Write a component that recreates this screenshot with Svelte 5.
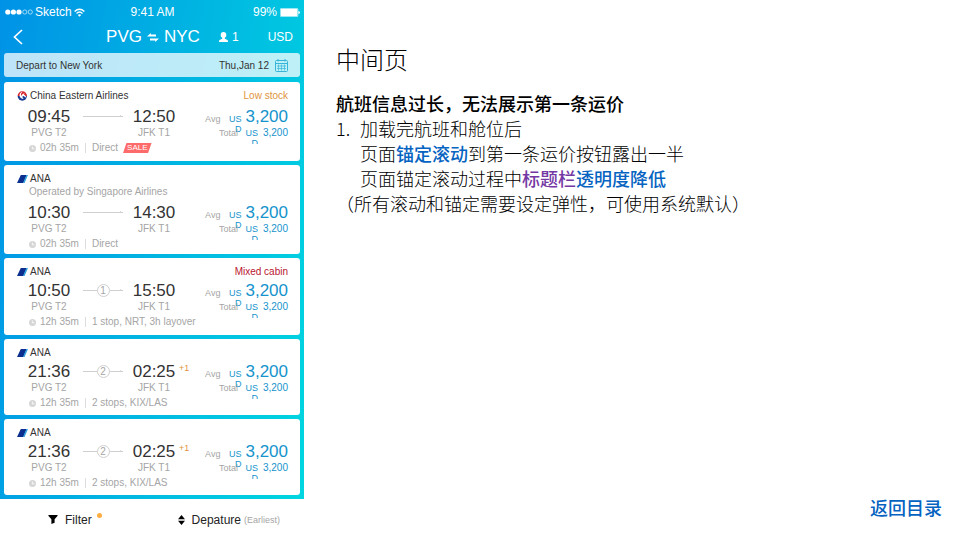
<script>
  const flights = [
    { airline: 'China Eastern Airlines', logo: 'mu', tag: 'Low stock', tone: 'low', dep: '09:45', arr: '12:50', stops: 0, duration: '02h 35m', detail: 'Direct', sale: true },
    { airline: 'ANA', logo: 'ana', operated: 'Operated by Singapore Airlines', dep: '10:30', arr: '14:30', stops: 0, duration: '02h 35m', detail: 'Direct' },
    { airline: 'ANA', logo: 'ana', tag: 'Mixed cabin', tone: 'mixed', dep: '10:50', arr: '15:50', stops: 1, duration: '12h 35m', detail: '1 stop, NRT, 3h layover' },
    { airline: 'ANA', logo: 'ana', dep: '21:36', arr: '02:25', nextDay: '+1', stops: 2, duration: '12h 35m', detail: '2 stops, KIX/LAS' },
    { airline: 'ANA', logo: 'ana', dep: '21:36', arr: '02:25', nextDay: '+1', stops: 2, duration: '12h 35m', detail: '2 stops, KIX/LAS' }
  ];
</script>

<div class="page">
  <section class="phone">
    <div class="screen">
      <div class="status">
        <span class="carrier">
          <svg width="28" height="6" viewBox="0 0 28 6" aria-hidden="true">
            <circle cx="2.8" cy="3" r="2.6" fill="#fff" /><circle cx="8.4" cy="3" r="2.6" fill="#fff" /><circle cx="14" cy="3" r="2.6" fill="#fff" />
            <circle cx="19.8" cy="3" r="2.1" fill="none" stroke="#fff" stroke-width=".6" /><circle cx="25.3" cy="3" r="2.1" fill="none" stroke="#fff" stroke-width=".6" />
          </svg>
          <span>Sketch</span>
          <svg width="11" height="9" viewBox="0 0 11 9" fill="none" stroke="#fff" stroke-width="1.4" aria-hidden="true">
            <path d="M.6 3.4Q5.5-1 10.4 3.4M2.5 5.4Q5.5 2.7 8.5 5.4" /><path d="M3.8 6.9Q5.5 5.4 7.2 6.9L5.5 8.7Z" fill="#fff" stroke="none" />
          </svg>
        </span>
        <span>9:41 AM</span>
        <span class="battery">
          <span>99%</span>
          <svg width="20" height="9" viewBox="0 0 20 9" aria-hidden="true">
            <rect x=".3" y=".3" width="17.6" height="8.4" rx="1" fill="none" stroke="#fff" stroke-width=".6" /><rect x=".8" y=".8" width="16.6" height="7.4" rx=".5" fill="#fff" /><path d="M18.4 3Q20 3.2 20 4.5T18.4 6Z" fill="#fff" />
          </svg>
        </span>
      </div>

      <header>
        <button class="back" aria-label="Back">
          <svg width="10" height="16" viewBox="0 0 10 16" fill="none" stroke="#fff" stroke-width="1.7"><path d="M9 1L1.5 8L9 15" /></svg>
        </button>
        <div class="route">
          <span>PVG</span>
          <svg width="12" height="9" viewBox="0 0 12 9" fill="#fff" aria-hidden="true"><path d="M3.8 0V1.6H9V3.4H0ZM8.2 9V7.4H3V5.6H12Z" /></svg>
          <span>NYC</span>
        </div>
        <div class="extras">
          <span class="travellers">
            <svg width="9" height="10" viewBox="0 0 9 10" fill="#fff" aria-hidden="true"><path d="M4.5 0C6.4 0 7.3 1.2 7.3 2.9C7.3 4.2 6.7 5.1 5.8 5.8V6.8L8.5 8Q9 8.4 9 10H0Q0 8.4.5 8L3.2 6.8V5.8C2.3 5.1 1.7 4.2 1.7 2.9C1.7 1.2 2.6 0 4.5 0Z" /></svg>
            1
          </span>
          <span>USD</span>
        </div>
      </header>

      <button class="date">
        <span>Depart to New York</span>
        <span class="day">
          Thu,Jan 12
          <svg width="13" height="13" viewBox="0 0 13 13" fill="none" stroke="#38b4d8" aria-hidden="true">
            <rect x=".5" y="1.5" width="12" height="11" rx="1" /><path d="M.5 4.5H12.5M3 0V2.5M10 0V2.5" />
            <path stroke-width=".7" d="M2 7H11M2 9.5H11M3.5 5.5V11.5M6.5 5.5V11.5M9.5 5.5V11.5" />
          </svg>
        </span>
      </button>

      {#each flights as f}
        <article class:tall={f.operated} class:roomy={f.sale} class:compact={f.nextDay}>
          <div class="head">
            {#if f.logo === 'mu'}
              <svg width="11" height="10" viewBox="0 0 11 10" aria-hidden="true">
                <path d="M.6 5A4.7 4.7 0 0 1 10 5Z" fill="#d8232c" /><path d="M.6 5A4.7 4.7 0 0 0 10 5Z" fill="#1b3c92" />
                <path d="M5.7.8C3 1.2 1.8 3.8 3 6C3.7 7.3 5.2 8 6.8 7.7C5.4 7 5.2 5.7 6 4.8L9.6 7C9 5.4 8 4.2 6.8 3.6L7.8 2.5L6 2.7C4.8 3.5 4.2 4.5 4.3 5.6C3.5 3.7 4 1.9 5.7.8Z" fill="#fff" />
              </svg>
            {:else}
              <svg width="11" height="8" viewBox="0 0 11 8" aria-hidden="true"><path d="M3.8 0H9.8L6.4 8H0Z" fill="#0c2f8f" /><path d="M9.4 0H11L7.6 8H6Z" fill="#32a4df" /></svg>
            {/if}
            <span class="airline">{f.airline}</span>
            {#if f.tag}<span class="tag {f.tone}">{f.tag}</span>{/if}
          </div>
          {#if f.operated}<div class="operated">{f.operated}</div>{/if}

          <div class="body">
            <div class="stop"><time>{f.dep}</time><span>PVG T2</span></div>
            <div class="path">
              {#if f.stops}
                <i></i><b>{f.stops}</b><i class="end"></i>
              {:else}
                <i class="end"></i>
              {/if}
            </div>
            <div class="stop"><time>{f.arr}</time><span>JFK T1</span></div>
            <sup>{f.nextDay ?? ''}</sup>
            <div class="prices">
              <div class="price avg"><span>Avg</span><em>USD</em><strong>3,200</strong></div>
              <div class="price total"><span>Total</span><em>USD</em><strong>3,200</strong></div>
            </div>
          </div>

          <div class="foot">
            <svg width="7" height="7" viewBox="0 0 7 7" aria-hidden="true"><circle cx="3.5" cy="3.5" r="3.5" fill="#d6d6d6" /><path d="M3.4 1.5V3.8H5.3" fill="none" stroke="#fff" stroke-width=".8" /></svg>
            <span class="duration">{f.duration}</span>
            <span class="detail">{f.detail}</span>
            {#if f.sale}<span class="sale">SALE</span>{/if}
          </div>
        </article>
      {/each}
    </div>

    <footer>
      <button class="filter">
        <svg width="10" height="9" viewBox="0 0 10 9" aria-hidden="true"><path d="M.5 0H9.5Q10 .7 9 1.6L6.6 4.2V7.8L3.4 9V4.2L1 1.6Q0 .7.5 0Z" /></svg>
        <span>Filter</span>
        <span class="dot"></span>
      </button>
      <button class="sort">
        <svg width="7" height="10" viewBox="0 0 7 10" aria-hidden="true"><path d="M3.5 0L7 4.2H0ZM3.5 10L7 5.8H0Z" /></svg>
        <span>Depature</span>
        <small>(Earliest)</small>
      </button>
    </footer>
  </section>

  <main>
    <h1>中间页</h1>
    <h2>航班信息过长，无法展示第一条运价</h2>
    <div class="item">
      <span>1.</span>
      <p>加载完航班和舱位后<br />页面<a href="#anchor">锚定滚动</a>到第一条运价按钮露出一半<br />页面锚定滚动过程中<a class="seen" href="#title-bar">标题栏</a><a href="#opacity">透明度降低</a></p>
    </div>
    <p>（所有滚动和锚定需要设定弹性，可使用系统默认）</p>
    <a class="return" href="#contents">返回目录</a>
  </main>
</div>

<style>
  :global(body) { margin: 0; background: #fff; }
  .page {
    display: grid;
    grid-template-columns: minmax(304px, 19fr) 41fr;
    min-height: 100vh;
    font-family: "Liberation Sans", Arial, sans-serif;
  }
  button { border: 0; padding: 0; background: none; font: inherit; color: inherit; cursor: pointer; }
  svg { display: block; flex: none; }
  .phone { display: flex; flex-direction: column; }
  .screen {
    display: flex;
    flex-direction: column;
    padding: 3px 4px 4px;
    background: linear-gradient(100deg, #0092e6 0%, #00b4e2 50%, #00d6e0 100%);
  }
  .status {
    display: grid;
    grid-template-columns: 1fr auto 1fr;
    align-items: center;
    height: 18px;
    padding: 0 0 0 1px;
    color: #fff;
    font-size: 12px;
    line-height: 18px;
  }
  .carrier, .battery { display: flex; align-items: center; gap: 2px; }
  .battery { justify-content: flex-end; gap: 3px; }
  header {
    display: grid;
    grid-template-columns: 1fr auto 1fr;
    align-items: center;
    height: 32px;
    padding: 0 7px 0 9px;
    color: #fff;
  }
  .back { justify-self: start; }
  .route { display: flex; align-items: center; gap: 5px; font-size: 17px; }
  .extras { display: flex; align-items: center; justify-content: space-between; padding-left: 19px; font-size: 12px; }
  .travellers { display: flex; align-items: center; gap: 4px; }
  .date {
    display: flex;
    align-items: center;
    justify-content: space-between;
    height: 24px;
    margin-bottom: 5px;
    padding: 0 12px;
    border-radius: 3px;
    background: rgba(255, 255, 255, .74);
    color: #333;
    font-size: 10px;
  }
  .day { display: flex; align-items: center; gap: 6px; }

  article {
    margin-bottom: 4px;
    padding: 8px 12px 7px 13px;
    border-radius: 3px;
    background: #fff;
    color: #a5a5a5;
    font-size: 10px;
    line-height: 12px;
  }
  article:last-child { margin-bottom: 0; }
  article.tall { padding-bottom: 4px; }
  article.compact { padding-bottom: 6px; }
  .head { display: flex; align-items: center; gap: 2px; height: 12px; margin-bottom: 3px; }
  .roomy .head { margin-bottom: 5px; }
  .tall .head { margin-bottom: 0; }
  .airline { color: #333; }
  .tag { margin-left: auto; }
  .low { color: #e0943c; }
  .mixed { color: #b9152f; }
  .operated { margin: 0 0 4px 12px; line-height: 14px; }
  .body { display: flex; margin-left: 11px; }
  .stop { display: flex; flex-direction: column; align-items: center; width: 42px; }
  .stop time { color: #333; font-size: 17px; line-height: 20px; }
  .stop span { white-space: nowrap; }
  .path { display: flex; align-items: center; width: 40px; height: 18px; margin: 0 10px 0 13px; }
  .path i { flex: 1; height: 1px; background: #cfcfcf; }
  .path .end { position: relative; }
  .path .end::after { content: ""; position: absolute; right: 0; top: -1px; border-left: 3px solid #cfcfcf; border-top: 2px solid transparent; }
  .path b {
    width: 11px;
    height: 11px;
    border: 1px solid #cfcfcf;
    border-radius: 50%;
    font-weight: 400;
    line-height: 11px;
    text-align: center;
  }
  sup { width: 20px; padding-left: 4px; color: #e0943c; font-size: 9px; line-height: 12px; }
  .prices { margin-left: auto; color: #1593cc; }
  .price { display: flex; justify-content: flex-end; align-items: flex-start; height: 20px; font-size: 9px; }
  .price span { color: #a5a5a5; }
  .price em { width: 14px; font-style: normal; line-height: 10px; text-align: right; word-break: break-all; }
  .price strong { font-weight: 400; }
  .avg span { padding-top: 6px; }
  .avg em { margin: 7px 4px 0 7px; }
  .avg strong { font-size: 17px; line-height: 19px; }
  .total { height: 12px; }
  .total em { height: 16px; margin: 1px 5px 0 6px; overflow: hidden; }
  .total strong { font-size: 10px; }
  .foot { display: flex; align-items: center; height: 12px; margin: 3px 0 0 12px; }
  .duration { margin-left: 4px; padding-right: 6px; border-right: 1px solid #ddd; line-height: 10px; }
  .detail { margin-left: 6px; }
  .sale {
    margin-left: 5px;
    padding: 0 4px;
    background: #ff6a6a;
    clip-path: polygon(12% 0, 100% 0, 88% 100%, 0 100%);
    color: #fff;
    font-size: 8px;
    line-height: 10px;
  }
  footer { display: flex; align-items: center; justify-content: space-between; height: 41px; padding: 0 24px 0 48px; color: #222; font-size: 12px; }
  footer button { display: flex; align-items: center; gap: 7px; }
  .dot { width: 5px; height: 5px; margin: 0 0 8px -2px; border-radius: 50%; background: #ffad42; }
  .sort small { margin-left: -4px; color: #a5a5a5; font-size: 9px; }

  main {
    display: flex;
    flex-direction: column;
    padding: 41px 18px 20px 32px;
    color: #000;
    font-family: "Noto Sans CJK SC", sans-serif;
    font-size: 18px;
    font-weight: 300;
    line-height: 25px;
  }
  h1 { margin: 0 0 14px; font-size: 24px; font-weight: 300; line-height: 36px; }
  h2 { margin: 0; font-size: 18px; font-weight: 500; line-height: 25px; }
  p { margin: 0; }
  .item { display: flex; }
  .item span { width: 24px; }
  a { color: #0563c1; font-weight: 500; text-decoration: none; }
  .seen { color: #7438a4; }
  .return { align-self: flex-end; margin-top: auto; }
</style>
